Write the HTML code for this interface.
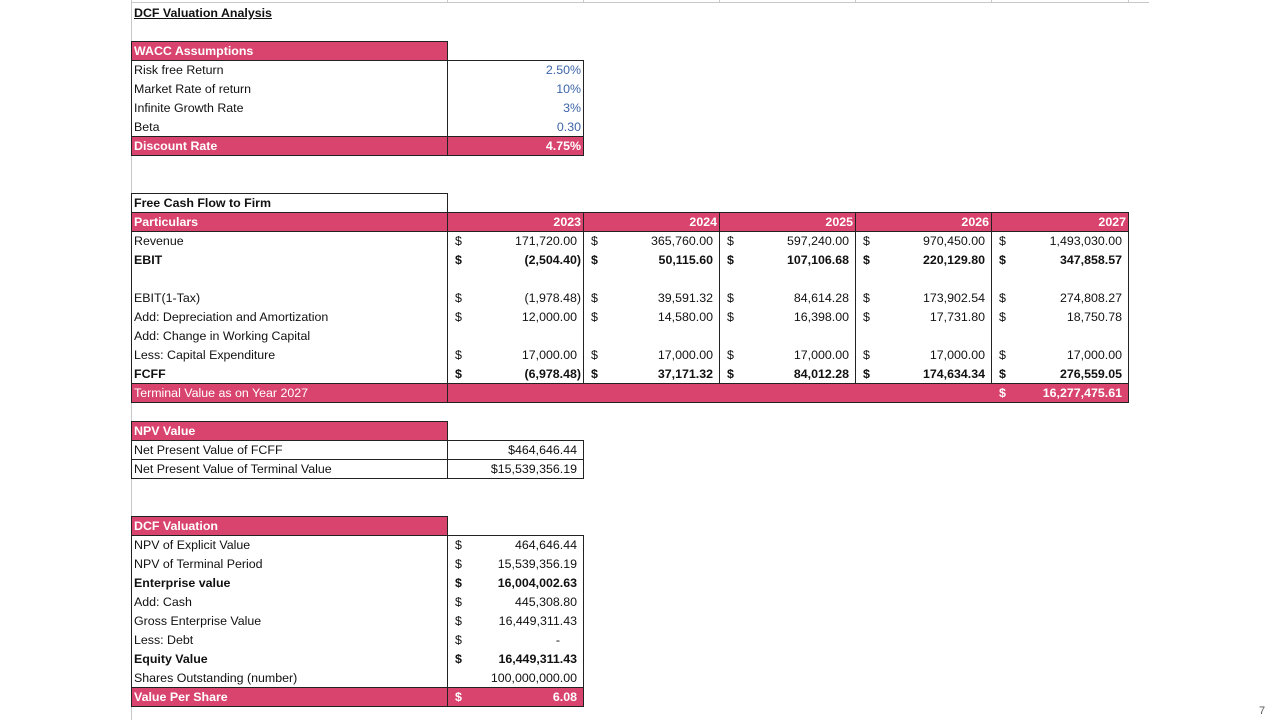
<!DOCTYPE html>
<html><head><meta charset="utf-8"><style>
*{margin:0;padding:0}
body{width:1280px;height:720px;background:#fff;position:relative;overflow:hidden;font-family:"Liberation Sans",sans-serif;font-size:12.4px;color:#111}
.t{position:absolute;height:19px;line-height:19px;white-space:nowrap;padding-top:1px}
.r{text-align:right}
.b{font-weight:bold}
.w{color:#fff}
.bl{color:#3d64a8}
.box{position:absolute;border:1px solid #222;box-sizing:border-box}
.p{position:absolute;background:#d9446f;border:1px solid #222;box-sizing:border-box}
.g{position:absolute;background:#c8c8c8}
</style></head><body>
<div class="g" style="left:131px;top:0;width:1px;height:720px"></div>
<div class="g" style="left:131px;top:2px;width:1018px;height:1px"></div>
<div class="g" style="left:447px;top:0;width:1px;height:3px"></div>
<div class="g" style="left:583px;top:0;width:1px;height:3px"></div>
<div class="g" style="left:719px;top:0;width:1px;height:3px"></div>
<div class="g" style="left:855px;top:0;width:1px;height:3px"></div>
<div class="g" style="left:991px;top:0;width:1px;height:3px"></div>
<div class="g" style="left:1128px;top:0;width:1px;height:3px"></div>

<div class="t b" style="left:134px;top:3px;text-decoration:underline">DCF Valuation Analysis</div>

<div class="p" style="left:131px;top:41px;width:317px;height:20px"></div>
<div class="t b w" style="left:134px;top:41px">WACC Assumptions</div>
<div class="box" style="left:131px;top:60px;width:317px;height:77px"></div>
<div class="box" style="left:447px;top:60px;width:137px;height:77px"></div>
<div class="t" style="left:134px;top:60px">Risk free Return</div>
<div class="t" style="left:134px;top:79px">Market Rate of return</div>
<div class="t" style="left:134px;top:98px">Infinite Growth Rate</div>
<div class="t" style="left:134px;top:117px">Beta</div>
<div class="t r bl" style="left:447px;width:134px;top:60px">2.50%</div>
<div class="t r bl" style="left:447px;width:134px;top:79px">10%</div>
<div class="t r bl" style="left:447px;width:134px;top:98px">3%</div>
<div class="t r bl" style="left:447px;width:134px;top:117px">0.30</div>
<div class="p" style="left:131px;top:136px;width:317px;height:20px"></div>
<div class="p" style="left:447px;top:136px;width:137px;height:20px"></div>
<div class="t b w" style="left:134px;top:136px">Discount Rate</div>
<div class="t r b w" style="left:447px;width:134px;top:136px">4.75%</div>

<div class="box" style="left:131px;top:193px;width:317px;height:20px"></div>
<div class="t b" style="left:134px;top:193px">Free Cash Flow to Firm</div>
<div class="p" style="left:131px;top:212px;width:998px;height:20px"></div>
<div class="g" style="left:447px;top:212px;width:1px;height:20px;background:#222"></div>
<div class="g" style="left:583px;top:212px;width:1px;height:20px;background:#222"></div>
<div class="g" style="left:719px;top:212px;width:1px;height:20px;background:#222"></div>
<div class="g" style="left:855px;top:212px;width:1px;height:20px;background:#222"></div>
<div class="g" style="left:991px;top:212px;width:1px;height:20px;background:#222"></div>
<div class="t b w" style="left:134px;top:212px">Particulars</div>
<div class="t r b w" style="left:447px;width:134px;top:212px">2023</div>
<div class="t r b w" style="left:583px;width:134px;top:212px">2024</div>
<div class="t r b w" style="left:719px;width:134px;top:212px">2025</div>
<div class="t r b w" style="left:855px;width:134px;top:212px">2026</div>
<div class="t r b w" style="left:991px;width:135px;top:212px">2027</div>
<div class="box" style="left:131px;top:231px;width:317px;height:153px"></div>
<div class="box" style="left:447px;top:231px;width:137px;height:153px"></div>
<div class="box" style="left:583px;top:231px;width:137px;height:153px"></div>
<div class="box" style="left:719px;top:231px;width:137px;height:153px"></div>
<div class="box" style="left:855px;top:231px;width:137px;height:153px"></div>
<div class="box" style="left:991px;top:231px;width:138px;height:153px"></div>
<div class="t" style="left:134px;top:231px">Revenue</div>
<div class="t b" style="left:134px;top:250px">EBIT</div>
<div class="t" style="left:134px;top:288px">EBIT(1-Tax)</div>
<div class="t" style="left:134px;top:307px">Add: Depreciation and Amortization</div>
<div class="t" style="left:134px;top:326px">Add: Change in Working Capital</div>
<div class="t" style="left:134px;top:345px">Less: Capital Expenditure</div>
<div class="t b" style="left:134px;top:364px">FCFF</div>

<div class="t" style="left:455px;top:231px">$</div><div class="t r" style="left:447px;width:130px;top:231px">171,720.00</div>
<div class="t b" style="left:455px;top:250px">$</div><div class="t r b" style="left:447px;width:134px;top:250px">(2,504.40)</div>
<div class="t" style="left:455px;top:288px">$</div><div class="t r" style="left:447px;width:134px;top:288px">(1,978.48)</div>
<div class="t" style="left:455px;top:307px">$</div><div class="t r" style="left:447px;width:130px;top:307px">12,000.00</div>
<div class="t" style="left:455px;top:345px">$</div><div class="t r" style="left:447px;width:130px;top:345px">17,000.00</div>
<div class="t b" style="left:455px;top:364px">$</div><div class="t r b" style="left:447px;width:134px;top:364px">(6,978.48)</div>
<div class="t" style="left:591px;top:231px">$</div><div class="t r" style="left:583px;width:130px;top:231px">365,760.00</div>
<div class="t b" style="left:591px;top:250px">$</div><div class="t r b" style="left:583px;width:130px;top:250px">50,115.60</div>
<div class="t" style="left:591px;top:288px">$</div><div class="t r" style="left:583px;width:130px;top:288px">39,591.32</div>
<div class="t" style="left:591px;top:307px">$</div><div class="t r" style="left:583px;width:130px;top:307px">14,580.00</div>
<div class="t" style="left:591px;top:345px">$</div><div class="t r" style="left:583px;width:130px;top:345px">17,000.00</div>
<div class="t b" style="left:591px;top:364px">$</div><div class="t r b" style="left:583px;width:130px;top:364px">37,171.32</div>
<div class="t" style="left:727px;top:231px">$</div><div class="t r" style="left:719px;width:130px;top:231px">597,240.00</div>
<div class="t b" style="left:727px;top:250px">$</div><div class="t r b" style="left:719px;width:130px;top:250px">107,106.68</div>
<div class="t" style="left:727px;top:288px">$</div><div class="t r" style="left:719px;width:130px;top:288px">84,614.28</div>
<div class="t" style="left:727px;top:307px">$</div><div class="t r" style="left:719px;width:130px;top:307px">16,398.00</div>
<div class="t" style="left:727px;top:345px">$</div><div class="t r" style="left:719px;width:130px;top:345px">17,000.00</div>
<div class="t b" style="left:727px;top:364px">$</div><div class="t r b" style="left:719px;width:130px;top:364px">84,012.28</div>
<div class="t" style="left:863px;top:231px">$</div><div class="t r" style="left:855px;width:130px;top:231px">970,450.00</div>
<div class="t b" style="left:863px;top:250px">$</div><div class="t r b" style="left:855px;width:130px;top:250px">220,129.80</div>
<div class="t" style="left:863px;top:288px">$</div><div class="t r" style="left:855px;width:130px;top:288px">173,902.54</div>
<div class="t" style="left:863px;top:307px">$</div><div class="t r" style="left:855px;width:130px;top:307px">17,731.80</div>
<div class="t" style="left:863px;top:345px">$</div><div class="t r" style="left:855px;width:130px;top:345px">17,000.00</div>
<div class="t b" style="left:863px;top:364px">$</div><div class="t r b" style="left:855px;width:130px;top:364px">174,634.34</div>
<div class="t" style="left:999px;top:231px">$</div><div class="t r" style="left:991px;width:131px;top:231px">1,493,030.00</div>
<div class="t b" style="left:999px;top:250px">$</div><div class="t r b" style="left:991px;width:131px;top:250px">347,858.57</div>
<div class="t" style="left:999px;top:288px">$</div><div class="t r" style="left:991px;width:131px;top:288px">274,808.27</div>
<div class="t" style="left:999px;top:307px">$</div><div class="t r" style="left:991px;width:131px;top:307px">18,750.78</div>
<div class="t" style="left:999px;top:345px">$</div><div class="t r" style="left:991px;width:131px;top:345px">17,000.00</div>
<div class="t b" style="left:999px;top:364px">$</div><div class="t r b" style="left:991px;width:131px;top:364px">276,559.05</div>

<div class="p" style="left:131px;top:383px;width:998px;height:20px"></div>
<div class="g" style="left:447px;top:383px;width:1px;height:20px;background:#222"></div>
<div class="t w" style="left:134px;top:383px">Terminal Value as on Year 2027</div>
<div class="t b w" style="left:999px;top:383px">$</div><div class="t r b w" style="left:991px;width:131px;top:383px">16,277,475.61</div>

<div class="p" style="left:131px;top:421px;width:317px;height:20px"></div>
<div class="t b w" style="left:134px;top:421px">NPV Value</div>
<div class="box" style="left:131px;top:440px;width:317px;height:20px"></div>
<div class="box" style="left:447px;top:440px;width:137px;height:20px"></div>
<div class="box" style="left:131px;top:459px;width:317px;height:20px"></div>
<div class="box" style="left:447px;top:459px;width:137px;height:20px"></div>
<div class="t" style="left:134px;top:440px">Net Present Value of FCFF</div>
<div class="t" style="left:134px;top:459px">Net Present Value of Terminal Value</div>
<div class="t r" style="left:447px;width:130px;top:440px">$464,646.44</div>
<div class="t r" style="left:447px;width:130px;top:459px">$15,539,356.19</div>

<div class="p" style="left:131px;top:516px;width:317px;height:20px"></div>
<div class="t b w" style="left:134px;top:516px">DCF Valuation</div>
<div class="box" style="left:131px;top:535px;width:317px;height:153px"></div>
<div class="box" style="left:447px;top:535px;width:137px;height:153px"></div>
<div class="t" style="left:134px;top:535px">NPV of Explicit Value</div>
<div class="t" style="left:134px;top:554px">NPV of Terminal Period</div>
<div class="t b" style="left:134px;top:573px">Enterprise value</div>
<div class="t" style="left:134px;top:592px">Add: Cash</div>
<div class="t" style="left:134px;top:611px">Gross Enterprise Value</div>
<div class="t" style="left:134px;top:630px">Less: Debt</div>
<div class="t b" style="left:134px;top:649px">Equity Value</div>
<div class="t" style="left:134px;top:668px">Shares Outstanding (number)</div>
<div class="t" style="left:455px;top:535px">$</div><div class="t r" style="left:447px;width:130px;top:535px">464,646.44</div>
<div class="t" style="left:455px;top:554px">$</div><div class="t r" style="left:447px;width:130px;top:554px">15,539,356.19</div>
<div class="t b" style="left:455px;top:573px">$</div><div class="t r b" style="left:447px;width:130px;top:573px">16,004,002.63</div>
<div class="t" style="left:455px;top:592px">$</div><div class="t r" style="left:447px;width:130px;top:592px">445,308.80</div>
<div class="t" style="left:455px;top:611px">$</div><div class="t r" style="left:447px;width:130px;top:611px">16,449,311.43</div>
<div class="t" style="left:455px;top:630px">$</div><div class="t r" style="left:447px;width:113px;top:630px">-</div>
<div class="t b" style="left:455px;top:649px">$</div><div class="t r b" style="left:447px;width:130px;top:649px">16,449,311.43</div>
<div class="t r" style="left:447px;width:130px;top:668px">100,000,000.00</div>
<div class="p" style="left:131px;top:687px;width:317px;height:20px"></div>
<div class="p" style="left:447px;top:687px;width:137px;height:20px"></div>
<div class="t b w" style="left:134px;top:687px">Value Per Share</div>
<div class="t b w" style="left:455px;top:687px">$</div><div class="t r b w" style="left:447px;width:130px;top:687px">6.08</div>

<div class="t" style="left:1259px;top:701px;font-size:11px;color:#555">7</div>
</body></html>
